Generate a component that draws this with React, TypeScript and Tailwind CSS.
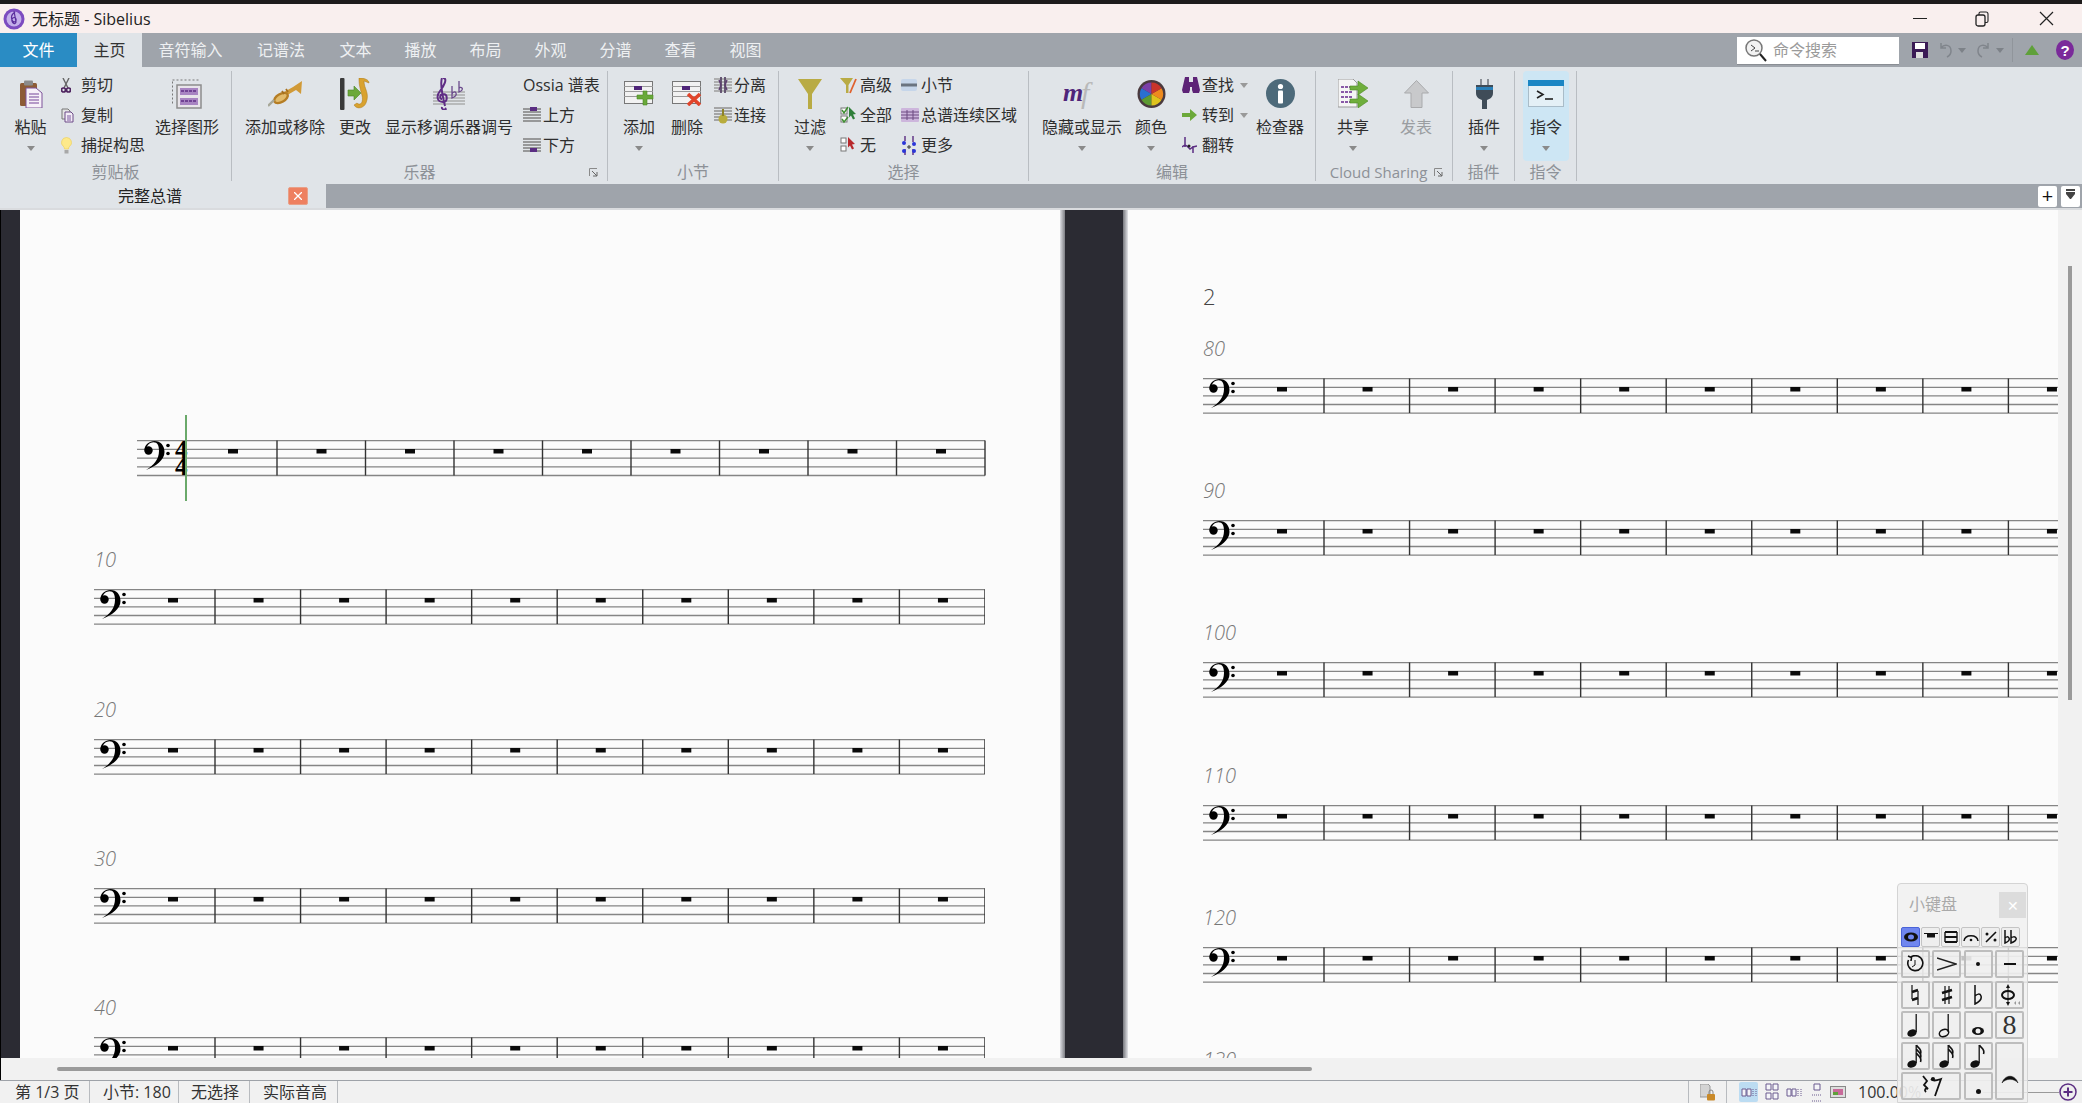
import type { ReactNode } from "react";

const Chevron = ({ color = "#8a8a8a" }: { color?: string }) => (
  <svg width="8" height="5" viewBox="0 0 8 5"><path d="M0 0h8L4 5z" fill={color} /></svg>
);

const StaffLines = ({ w = 18, color = "#777" }: { w?: number; color?: string }) => (
  <>
    {[2, 5, 8, 11, 14].map((y) => (
      <line key={y} x1="0" x2={w} y1={y} y2={y} stroke={color} strokeWidth="1.4" />
    ))}
  </>
);

const ic = {
  paste: (
    <svg width="24" height="28" viewBox="0 0 24 28">
      <rect x="1" y="3" width="17" height="23" rx="1.5" fill="#8d5c36" />
      <rect x="5" y="0.5" width="9" height="5" rx="1" fill="#8b8b8b" />
      <path d="M7 8h10l6 5v15H7z" fill="#f6f0f8" stroke="#7c5299" />
      {[14, 17, 20, 23].map((y) => (
        <line key={y} x1="10" x2="20" y1={y} y2={y} stroke="#9a74b4" strokeWidth="1.4" />
      ))}
    </svg>
  ),
  scissors: (
    <svg width="10" height="15" viewBox="0 0 10 15">
      <path d="M2 0l5 10M8 0L3 10" stroke="#666" strokeWidth="1.4" fill="none" />
      <circle cx="2.5" cy="12" r="2" fill="none" stroke="#4f2560" strokeWidth="1.7" />
      <circle cx="7.5" cy="12" r="2" fill="none" stroke="#4f2560" strokeWidth="1.7" />
    </svg>
  ),
  copy: (
    <svg width="13" height="15" viewBox="0 0 13 15">
      <path d="M1 1h6l2 2v8H1z" fill="#e4e4e4" stroke="#777" />
      <path d="M4 4h6l2 2v8H4z" fill="#f3edf6" stroke="#6d4a88" />
      <path d="M6 8h4M6 10h4M6 12h4" stroke="#7d58a0" />
    </svg>
  ),
  bulb: (
    <svg width="11" height="17" viewBox="0 0 11 17">
      <path d="M5.5 0.5a5 5 0 0 1 3 9c-.7.7-1 1.5-1 2.5h-4c0-1-.3-1.800-1-2.500a5 5 0 0 1 3-9z" fill="#fde98a" stroke="#ecd060" strokeWidth=".7" />
      <rect x="3.500" y="13" width="4" height="3.500" fill="#a8a8a8" />
    </svg>
  ),
  select: (
    <svg width="30" height="31" viewBox="0 0 30 31">
      <path d="M0.500 3.500V26M0.500 2H28" stroke="#777" strokeDasharray="2 2" fill="none" />
      <rect x="5" y="7" width="24" height="23" fill="#e8e4ea" stroke="#8c8c8c" strokeWidth="1.500" />
      <rect x="8" y="10" width="18" height="7" fill="#a884c2" />
      <rect x="8" y="20" width="18" height="7" fill="#a884c2" />
      <path d="M9 13h16M9 23h16" stroke="#5f2d85" strokeWidth="1.500" strokeDasharray="3 1" />
    </svg>
  ),
  trumpet: (
    <svg width="34" height="26" viewBox="0 0 34 26">
      <path d="M34 0L33 13l-5-4L9 20l-2-4L25 6z" fill="#d19a37" />
      <ellipse cx="13" cy="17" rx="7.500" ry="4" transform="rotate(-30 13 17)" fill="#e2bb6b" stroke="#b57d24" strokeWidth="2.400" />
      <path d="M6 19L0 25" stroke="#a7a798" strokeWidth="2.400" />
      <path d="M14 10l2 3M18 8l2 3" stroke="#a57020" strokeWidth="1.800" />
    </svg>
  ),
  change: (
    <svg width="32" height="32" viewBox="0 0 32 32">
      <rect x="1" y="0" width="4.500" height="32" rx="1" fill="#3a3a3a" />
      <path d="M9 12h6V8l7 7-7 7v-4H9z" fill="#6ca93a" stroke="#4b8427" strokeWidth=".6" />
      <path d="M20 0c6 0 10 2 10 5l-5-2c0 8 6 12 2 22-2 5-9 7-12 2l3-2c2 2 4 1 5-1 2-6-3-12-3-22z" fill="#d9a22f" stroke="#a9781a" strokeWidth=".5" />
    </svg>
  ),
  transpose: (
    <svg width="32" height="32" viewBox="0 0 32 32">
      {[14, 17, 20, 23, 26].map((y) => (
        <line key={y} x1="0" x2="32" y1={y} y2={y} stroke="#a2a2a2" strokeWidth="1.300" />
      ))}
      <path d="M12 30c3 3-4 2-3-1M10 0c5 0 1 8-3 13-4 5-3 11 3 11 5 0 5-8 0-8-3 0-4 5-1 5M9 0c-2 5 1 20 3 28" fill="none" stroke="#5f2d85" strokeWidth="2" />
      <path d="M19 8v12c3-1 5-3 4-5s-3-1-4 1M26 3v11c3-1 4-3 3-4s-3-1-3 1" fill="none" stroke="#6b4a8c" strokeWidth="1.300" />
    </svg>
  ),
  above: (
    <svg width="18" height="16" viewBox="0 0 18 16">
      <StaffLines color="#777" />
      <rect x="7" y="0" width="7" height="4" fill="#5a2d82" />
    </svg>
  ),
  below: (
    <svg width="18" height="16" viewBox="0 0 18 16">
      <StaffLines color="#777" />
      <rect x="7" y="11" width="7" height="4" fill="#5a2d82" />
    </svg>
  ),
  add: (
    <svg width="30" height="25" viewBox="0 0 30 25">
      <rect x="0.500" y="0.500" width="28" height="22" fill="#f2f2f2" stroke="#777" />
      <path d="M0 5.500h29M0 10.500h29M0 15.500h29" stroke="#9a9a9a" />
      <rect x="10" y="5" width="8" height="4" fill="#4f2579" />
      <path d="M19 10h4v4h6v4h-6v6h-4v-6h-6v-4h6z" fill="#69a93a" stroke="#4c8a24" strokeWidth=".6" />
    </svg>
  ),
  remove: (
    <svg width="30" height="25" viewBox="0 0 30 25">
      <rect x="0.500" y="0.500" width="28" height="22" fill="#f2f2f2" stroke="#777" />
      <path d="M0 5.500h29M0 10.500h29M0 15.500h29" stroke="#9a9a9a" />
      <rect x="10" y="5" width="8" height="4" fill="#4f2579" />
      <path d="M16 13l12 11M28 13L16 24" stroke="#e1442a" strokeWidth="3.600" />
    </svg>
  ),
  split: (
    <svg width="18" height="16" viewBox="0 0 18 16">
      <StaffLines color="#999" />
      <path d="M7 0v16M11 0v16" stroke="#5b4a6a" strokeWidth="1.800" />
      <path d="M7 8L5 3M11 8l2-5M7 8l-2 5M11 8l2 5" stroke="#5d3d70" strokeWidth="1.400" />
    </svg>
  ),
  join: (
    <svg width="18" height="18" viewBox="0 0 18 18">
      <StaffLines color="#8a8a8a" />
      <circle cx="9" cy="13" r="4.500" fill="#b8ac3c" />
      <rect x="8" y="3" width="2" height="7" fill="#8e8428" />
    </svg>
  ),
  filter: (
    <svg width="24" height="30" viewBox="0 0 24 30">
      <path d="M0 0h24L14 15v15h-4V15z" fill="#b9ab44" />
    </svg>
  ),
  advanced: (
    <svg width="17" height="17" viewBox="0 0 17 17">
      <path d="M0 1h13L8.500 8v8H6V8z" fill="#b9ab44" />
      <path d="M16 2L10 16" stroke="#e0622e" strokeWidth="1.800" />
    </svg>
  ),
  all: (
    <svg width="18" height="18" viewBox="0 0 18 18">
      <rect x="1" y="2" width="6" height="6" fill="#fff" stroke="#777" />
      <rect x="1" y="10" width="6" height="6" fill="#fff" stroke="#777" />
      <path d="M2 4l2 3 4-6M2 13l2 3 4-5" stroke="#3f8f32" strokeWidth="1.500" fill="none" />
      <path d="M9 1l7 7-3 .5 2 4-2 1-2-4-2 2z" fill="#2f7f3a" />
    </svg>
  ),
  none: (
    <svg width="18" height="18" viewBox="0 0 18 18">
      <rect x="1" y="2" width="5" height="5" fill="#fff" stroke="#777" />
      <rect x="1" y="10" width="5" height="5" fill="#fff" stroke="#777" />
      <path d="M8 1l7 7-3 .5 2 4-2 1-2-4-2 2z" fill="#b8282c" />
    </svg>
  ),
  bar: (
    <svg width="16" height="12" viewBox="0 0 16 12">
      <rect x="0" y="0" width="16" height="12" rx="2" fill="#c6d6ea" />
      <path d="M0 6h16" stroke="#6a7480" strokeWidth="3" />
    </svg>
  ),
  passage: (
    <svg width="18" height="14" viewBox="0 0 18 14">
      <rect x="0" y="0" width="18" height="14" rx="1" fill="#cdb6dc" />
      <path d="M0 4h18M0 7h18M0 10h18" stroke="#6c4a80" />
      <path d="M6 2v10M12 2v10" stroke="#6c4a80" />
    </svg>
  ),
  more: (
    <svg width="16" height="19" viewBox="0 0 16 19">
      <path d="M4 0v5M12 0v6M4 13v6M12 13v6" stroke="#5b2d82" strokeWidth="1.400" />
      <circle cx="3" cy="7" r="2" fill="#2a35d8" />
      <circle cx="13" cy="8" r="2" fill="#2a35d8" />
      <circle cx="3" cy="15" r="2" fill="#2a35d8" />
      <circle cx="13" cy="15" r="2" fill="#2a35d8" />
      <path d="M6 11h4M8 9v4" stroke="#333" />
    </svg>
  ),
  color: (
    <svg width="29" height="30" viewBox="0 0 30 30">
      <circle cx="15" cy="15" r="14.500" fill="#4a3a3e" />
      <path d="M15 15L15 3A12 12 0 0 0 4.600 9z" fill="#7b3fa8" />
      <path d="M15 15L4.600 9a12 12 0 0 0 0 12z" fill="#2a6fd0" />
      <path d="M15 15L4.600 21A12 12 0 0 0 15 27z" fill="#5d9a32" />
      <path d="M15 15v12a12 12 0 0 0 10.400-6z" fill="#dfc31c" />
      <path d="M15 15l10.400 6a12 12 0 0 0 0-12z" fill="#ee8a1e" />
      <path d="M15 15l10.400-6A12 12 0 0 0 15 3z" fill="#c9352a" />
    </svg>
  ),
  find: (
    <svg width="18" height="16" viewBox="0 0 18 16">
      <path d="M3 0h4v5h4V0h4l3 13-1 3h-6l-1-3V10H8v3l-1 3H1l-1-3z" fill="#5d2376" />
    </svg>
  ),
  goto: (
    <svg width="15" height="12" viewBox="0 0 15 12">
      <path d="M0 4h8V0l7 6-7 6V8H0z" fill="#6ca93a" />
    </svg>
  ),
  flip: (
    <svg width="15" height="16" viewBox="0 0 15 16">
      <path d="M3 0v10M0 10l3-2 2 1 3 3 3-2 4-1M11 9v7" stroke="#5b2d82" strokeWidth="1.500" fill="none" />
      <circle cx="7" cy="9" r="1.500" fill="#222" />
    </svg>
  ),
  info: (
    <svg width="29" height="29" viewBox="0 0 29 29">
      <circle cx="14.500" cy="14.500" r="14.500" fill="#4d6a7a" />
      <circle cx="14.500" cy="7.500" r="2.600" fill="#fff" />
      <rect x="12" y="11.500" width="5" height="13" rx="1" fill="#fff" />
    </svg>
  ),
  share: (
    <svg width="31" height="29" viewBox="0 0 31 29">
      <path d="M0 0h15l4 4v24H0z" fill="#f5f5f5" stroke="#999" />
      {[8, 13, 18, 23].map((y) => (
        <path key={y} d="M3 0h12" transform={`translate(0 ${y})`} stroke="#8a5aa8" strokeWidth="2" strokeDasharray="3 1" />
      ))}
      <path d="M12 7h8V2l10 7-10 7v-5h-8z" fill="#6fae3c" stroke="#4c8a24" strokeWidth=".6" />
      <path d="M12 20h8v-5l10 7-10 7v-5h-8z" fill="#6fae3c" stroke="#4c8a24" strokeWidth=".6" />
    </svg>
  ),
  publish: (
    <svg width="25" height="28" viewBox="0 0 25 28">
      <path d="M12.500 0.500L24.500 13H18v14.500H7V13H.5z" fill="#c8c9cb" stroke="#a9aaac" />
    </svg>
  ),
  plug: (
    <svg width="17" height="30" viewBox="0 0 17 30">
      <path d="M4 0h2v6H4zM11 0h2v6h-2z" fill="#8a8f96" />
      <path d="M0 6h17v8c0 4-3 6-6 7v9H6v-9c-3-1-6-3-6-7z" fill="#3f4c58" />
      <rect x="0" y="8" width="17" height="3" fill="#2a7fb8" />
    </svg>
  ),
  command: (
    <svg width="36" height="27" viewBox="0 0 36 27">
      <rect x="0.500" y="0.500" width="35" height="26" fill="#e4f0f6" stroke="#a9bcc8" />
      <rect x="0" y="0" width="36" height="6" fill="#1a86c4" />
      <path d="M9 11l6 3.500-6 3.500" fill="none" stroke="#222" strokeWidth="1.600" />
      <path d="M17 19h8" stroke="#222" strokeWidth="1.600" />
    </svg>
  ),
  mf: (
    <svg width="38" height="36" viewBox="0 0 38 36" className="overflow-visible">
      <text x="18" y="27" fontFamily="'Liberation Serif', serif" fontSize="30" fontStyle="italic" fill="#b9b9b9">f</text>
      <text x="0" y="25" fontFamily="'Liberation Serif', serif" fontSize="26" fontStyle="italic" fontWeight="700" fill="#4f2579">m</text>
    </svg>
  ),
};

const BigButton = ({ icon, label, w, chevron, dim, on }: { icon: ReactNode; label: string; w: string; chevron?: boolean; dim?: boolean; on?: boolean }) => (
  <div className={`flex flex-col items-center h-[90px] rounded-sm ${w} ${on ? "bg-[#cde6f4]" : ""}`}>
    <div className="flex h-[45px] items-center justify-center">{icon}</div>
    <div className={`h-[22px] whitespace-nowrap leading-[22px] ${dim ? "text-[#9a9da1]" : ""}`}>{label}</div>
    <div className="flex h-[21px] items-center">{chevron && <Chevron />}</div>
  </div>
);

const SmallCol = ({ w, items }: { w: string; items: { icon?: ReactNode; label: string; chevron?: boolean }[] }) => (
  <div className={`-mt-[1px] flex flex-col ${w}`}>
    {items.map((it) => (
      <div key={it.label} className="flex h-[30px] items-center whitespace-nowrap">
        {it.icon && <div className="flex w-[20px] shrink-0 items-center">{it.icon}</div>}
        <span>{it.label}</span>
        {it.chevron && <span className="ml-[6px]"><Chevron color="#999" /></span>}
      </div>
    ))}
  </div>
);

const Expander = () => (
  <svg className="absolute bottom-[4px] right-[9px]" width="9" height="9" viewBox="0 0 9 9">
    <path d="M0.500 8V0.500H8" fill="none" stroke="#8a8a8a" />
    <path d="M3 3l5 5M8 4v4H4" fill="none" stroke="#666" />
  </svg>
);

const Group = ({ w, label, children, expander, pad }: { w: string; label: string; children: ReactNode; expander?: boolean; pad?: string }) => (
  <div className={`relative flex h-[110px] flex-col border-r border-[#b9bdc2] ${w}`}>
    <div className="flex h-[90px]">{children}</div>
    <div className={`h-[20px] text-center leading-[22px] text-[#8d9197] ${pad ?? ""}`}>{label}</div>
    {expander && <Expander />}
  </div>
);

const BassClef = () => (
  <g>
    <circle cx="5.500" cy="9.500" r="4.200" />
    <path d="M1.500 9C1.500 3.500 6.500 0 11.500 0 17.500 0 21.500 4.500 21.500 11 21.500 19 12.500 25.500 3 29 10.500 24.500 16 18.500 16 10 16 4.500 14.500 1.200 10.500 1.200 7 1.200 4 4 3.500 7z" />
    <circle cx="25" cy="4.500" r="1.800" />
    <circle cx="25" cy="12.500" r="1.800" />
  </g>
);

const staffY = [0, 1, 2, 3, 4];

const System = ({ width }: { width: number }) => (
  <svg width={width} height="36" viewBox={`0 0 ${width} 36`} className="block">
    {staffY.map((i) => (
      <line key={i} x1="0" x2={width} y1={0.7 + i * 8.6} y2={0.7 + i * 8.6} stroke="#858585" strokeWidth="1.300" />
    ))}
    {Array.from({ length: 10 }, (_, i) => (
      <g key={i}>
        <line x1={121 + i * 85.55} x2={121 + i * 85.55} y1="0.500" y2="35" stroke="#333" strokeWidth="1.400" />
        <rect x={74 + i * 85.55} y="9" width="10" height="4.500" fill="#0a0a0a" />
      </g>
    ))}
    <g transform="translate(5 1)"><BassClef /></g>
  </svg>
);

const FirstSystem = () => (
  <svg width="849" height="36" viewBox="0 0 849 36" className="block overflow-visible">
    {staffY.map((i) => (
      <line key={i} x1="0" x2="848" y1={0.7 + i * 8.7} y2={0.7 + i * 8.7} stroke="#858585" strokeWidth="1.300" />
    ))}
    {Array.from({ length: 9 }, (_, i) => (
      <g key={i}>
        <line x1={140 + i * 88.5} x2={140 + i * 88.5} y1="0.500" y2="35.500" stroke="#333" strokeWidth="1.400" />
        <rect x={91 + i * 88.5} y="9" width="10" height="4.500" fill="#0a0a0a" />
      </g>
    ))}
    <g transform="translate(6 1)"><BassClef /></g>
    <text x="38" y="18" fontFamily="'Liberation Serif', serif" fontWeight="700" fontSize="25">4</text>
    <text x="38" y="35" fontFamily="'Liberation Serif', serif" fontWeight="700" fontSize="25">4</text>
    <line x1="49" x2="49" y1="-25" y2="61" stroke="#6aa96a" strokeWidth="2" />
  </svg>
);

const BarNumber = ({ n }: { n: number }) => (
  <div className="mb-[17px] mt-[1px] h-[24px] text-[20px] font-light italic leading-[24px] text-[#777]">{n}</div>
);

// ---- keypad bits
const Note = ({ flags = 0, hollow, stem = true }: { flags?: number; hollow?: boolean; stem?: boolean }) => (
  <svg width="22" height="26" viewBox="0 0 22 26">
    <ellipse cx="8" cy="21" rx="4.800" ry="3.500" transform="rotate(-20 8 21)" fill={hollow ? "none" : "#111"} stroke="#111" strokeWidth={hollow ? 1.500 : 0} />
    {stem && <path d="M12.200 20V2" stroke="#111" strokeWidth="1.300" />}
    {Array.from({ length: flags }, (_, i) => (
      <path key={i} d={`M12.500 ${2 + i * 4}c1 3 6 4 4 9`} stroke="#111" strokeWidth="1.600" fill="none" />
    ))}
  </svg>
);

const Key = ({ children, className = "" }: { children?: ReactNode; className?: string }) => (
  <div className={`flex items-center justify-center rounded-[2px] border-2 border-[#bdbdbd] bg-[#eeeeee]/60 text-[#111] ${className}`}>{children}</div>
);

const keypadTabs: ReactNode[] = [
  <svg key="a" width="16" height="10" viewBox="0 0 16 10"><ellipse cx="8" cy="5" rx="7" ry="4.500" fill="#111" /><ellipse cx="8" cy="5" rx="3" ry="2.500" fill="#6f86ef" /></svg>,
  <svg key="b" width="14" height="10" viewBox="0 0 14 10"><path d="M0 1.500h14" stroke="#111" /><rect x="3" y="1.500" width="8" height="4" fill="#111" /></svg>,
  <svg key="c" width="14" height="12" viewBox="0 0 14 12"><path d="M1 1h12M1 11h12" stroke="#111" strokeWidth="2" /><path d="M1 1v10M13 1v10" stroke="#111" strokeWidth="1.400" /><path d="M1 6h12" stroke="#111" strokeWidth="2" /></svg>,
  <svg key="d" width="16" height="10" viewBox="0 0 16 10"><path d="M1 9C2 2 14 2 15 9" fill="none" stroke="#111" strokeWidth="1.500" /><circle cx="8" cy="8" r="1.300" fill="#111" /></svg>,
  <svg key="e" width="14" height="12" viewBox="0 0 14 12"><path d="M2 11L12 1" stroke="#111" strokeWidth="1.600" /><circle cx="3" cy="3" r="1.500" fill="#111" /><circle cx="11" cy="9" r="1.500" fill="#111" /></svg>,
  <svg key="f" width="16" height="14" viewBox="0 0 16 14"><path d="M2 0v13c3-1 5-3 4-5s-3-1-4 0M8 0v13c3-1 6-3 5-5s-4-1-5 0" fill="none" stroke="#111" strokeWidth="1.500" /></svg>,
];

export default function App() {
  return (
    <div className="relative flex h-[1103px] w-[2082px] flex-col overflow-hidden bg-[#f1f1f1] font-['Open_Sans','Noto_Sans_CJK_SC',sans-serif] text-[16px] text-[#2b2b2b]">
      <div className="h-[4px] bg-[#1d1b1b]" />

      {/* title bar */}
      <div className="flex h-[29px] items-center bg-[#f9efee] pl-[3px]">
        <svg width="22" height="22" viewBox="0 0 22 22" className="mr-[7px]">
          <circle cx="11" cy="11" r="10.500" fill="#7c4bc0" />
          <circle cx="11" cy="11" r="7.500" fill="#c3aeea" />
          <path d="M12 4c-4 3-4 5-3 8 1 3 5 2 4-1s-5-1-4 2c.5 2 3 4 4 1L11 3" fill="none" stroke="#5a2e9c" strokeWidth="1.200" />
        </svg>
        <span className="text-[16px] text-[#222]">无标题 - Sibelius</span>
        <div className="ml-auto flex items-center">
          <span className="mr-[48px] h-[1.500px] w-[14px] bg-[#222]" />
          <svg width="14" height="16" viewBox="0 0 14 16" className="mr-[50px]">
            <rect x="1" y="4" width="9" height="11" rx="2" fill="none" stroke="#222" strokeWidth="1.300" />
            <path d="M4 4V2.500C4 1.500 4.500 1 5.500 1H11c1 0 2 1 2 2v7c0 1-.5 1.500-1.500 1.500H10" fill="none" stroke="#222" strokeWidth="1.100" />
          </svg>
          <svg width="15" height="15" viewBox="0 0 15 15" className="mr-[28px]">
            <path d="M1 1l13 13M14 1L1 14" stroke="#222" strokeWidth="1.200" />
          </svg>
        </div>
      </div>

      {/* ribbon tabs */}
      <div className="flex h-[34px] items-center bg-[#9fa4ab] text-[#eef0f2]">
        <div className="flex h-full w-[77px] items-center justify-center bg-[#2a8cc4] text-white">文件</div>
        <div className="flex h-full w-[65px] items-center justify-center bg-[#e0e4e8] text-[#333]">主页</div>
        <div className="flex h-full w-[97px] items-center justify-center">音符输入</div>
        <div className="flex h-full w-[84px] items-center justify-center">记谱法</div>
        <div className="flex h-full w-[65px] items-center justify-center">文本</div>
        <div className="flex h-full w-[65px] items-center justify-center">播放</div>
        <div className="flex h-full w-[65px] items-center justify-center">布局</div>
        <div className="flex h-full w-[65px] items-center justify-center">外观</div>
        <div className="flex h-full w-[65px] items-center justify-center">分谱</div>
        <div className="flex h-full w-[65px] items-center justify-center">查看</div>
        <div className="flex h-full w-[65px] items-center justify-center">视图</div>

        <div className="ml-auto flex items-center">
          <div className="flex h-[27px] w-[162px] items-center bg-white pl-[8px] text-[#9a9a9a] shadow-[0_1px_0_#8a8e94]">
            <svg width="22" height="24" viewBox="0 0 22 24" className="mr-[6px]">
              <circle cx="9" cy="10" r="8" fill="#f2f2f2" stroke="#777" strokeWidth="1.500" />
              <path d="M6 7l4 3-4 3M10 13h4" fill="none" stroke="#444" />
              <path d="M15 16l6 7" stroke="#222" strokeWidth="2" />
            </svg>
            命令搜索
          </div>
          <svg width="16" height="16" viewBox="0 0 16 16" className="ml-[13px]">
            <path d="M0 0h16v16H0z" fill="#3a1a55" />
            <rect x="3" y="1" width="10" height="6" fill="#fff" />
            <rect x="4" y="10" width="7" height="6" fill="#ddd" />
          </svg>
          <svg width="14" height="16" viewBox="0 0 14 16" className="ml-[10px]">
            <path d="M3 1v5h5M3 6c3-4 10-4 10 3 0 3-2 5-4 6" fill="none" stroke="#80858c" strokeWidth="1.500" />
          </svg>
          <span className="ml-[6px]"><Chevron color="#7d8288" /></span>
          <svg width="15" height="16" viewBox="0 0 15 16" className="ml-[11px]">
            <path d="M11 1v5H6M11 6C8 2 1 2 1 9c0 3 2 5 4 6" fill="none" stroke="#80858c" strokeWidth="1.500" />
          </svg>
          <span className="ml-[4px]"><Chevron color="#7d8288" /></span>
          <span className="ml-[8px] h-[24px] w-px bg-[#90959b]" />
          <svg width="14" height="10" viewBox="0 0 14 10" className="ml-[12px]">
            <path d="M7 0l7 10H0z" fill="#5fa03a" />
          </svg>
          <svg width="18" height="20" viewBox="0 0 18 20" className="ml-[17px] mr-[8px]">
            <ellipse cx="9" cy="10" rx="9" ry="10" fill="#7a2a9a" />
            <text x="9" y="15.500" textAnchor="middle" fontSize="15" fontWeight="700" fill="#fff" fontFamily="'Liberation Sans', sans-serif">?</text>
          </svg>
        </div>
      </div>

      {/* ribbon */}
      <div className="flex h-[117px] bg-[#e0e4e8] pt-[4px] text-[16px] text-[#2e2e2e]">
        <Group w="w-[232px]" label="剪贴板">
          <BigButton w="w-[61px]" icon={ic.paste} label="粘贴" chevron />
          <SmallCol w="w-[89px]" items={[{ icon: ic.scissors, label: "剪切" }, { icon: ic.copy, label: "复制" }, { icon: ic.bulb, label: "捕捉构思" }]} />
          <BigButton w="w-[74px]" icon={ic.select} label="选择图形" />
        </Group>
        <Group w="w-[376px]" label="乐器" expander>
          <div className="ml-[13px] flex">
            <BigButton w="w-[80px]" icon={ic.trumpet} label="添加或移除" />
            <BigButton w="w-[32px] ml-[14px]" icon={ic.change} label="更改" />
            <BigButton w="w-[128px] ml-[14px]" icon={ic.transpose} label="显示移调乐器调号" />
          </div>
          <SmallCol
            w="w-[90px] ml-[10px]"
            items={[{ label: "Ossia 谱表" }, { icon: ic.above, label: "上方" }, { icon: ic.below, label: "下方" }]}
          />
        </Group>
        <Group w="w-[171px]" label="小节">
          <BigButton w="w-[48px] ml-[7px]" icon={ic.add} label="添加" chevron />
          <BigButton w="w-[48px]" icon={ic.remove} label="删除" />
          <SmallCol w="w-[60px] ml-[3px]" items={[{ icon: ic.split, label: "分离" }, { icon: ic.join, label: "连接" }]} />
        </Group>
        <Group w="w-[250px]" label="选择">
          <BigButton w="w-[48px] ml-[7px]" icon={ic.filter} label="过滤" chevron />
          <SmallCol w="w-[61px] ml-[6px]" items={[{ icon: ic.advanced, label: "高级" }, { icon: ic.all, label: "全部" }, { icon: ic.none, label: "无" }]} />
          <SmallCol w="w-[120px]" items={[{ icon: ic.bar, label: "小节" }, { icon: ic.passage, label: "总谱连续区域" }, { icon: ic.more, label: "更多" }]} />
        </Group>
        <Group w="w-[287px]" label="编辑">
          <BigButton w="w-[80px] ml-[13px]" icon={ic.mf} label="隐藏或显示" chevron />
          <BigButton w="w-[48px] ml-[5px]" icon={ic.color} label="颜色" chevron />
          <SmallCol w="w-[74px] ml-[7px]" items={[{ icon: ic.find, label: "查找", chevron: true }, { icon: ic.goto, label: "转到", chevron: true }, { icon: ic.flip, label: "翻转" }]} />
          <BigButton w="w-[48px]" icon={ic.info} label="检查器" />
        </Group>
        <Group w="w-[137px]" label="Cloud Sharing" expander pad="pr-[11px] text-[15px]">
          <BigButton w="w-[48px] ml-[13px]" icon={ic.share} label="共享" chevron />
          <BigButton w="w-[48px] ml-[15px]" icon={ic.publish} label="发表" dim />
        </Group>
        <Group w="w-[62px]" label="插件">
          <BigButton w="w-[48px] ml-[7px]" icon={ic.plug} label="插件" chevron />
        </Group>
        <Group w="w-[62px]" label="指令">
          <BigButton w="w-[46px] ml-[8px]" icon={ic.command} label="指令" chevron on />
        </Group>
      </div>

      {/* document tabs */}
      <div className="flex h-[24px] items-center bg-[#9fa4ab]">
        <div className="flex h-full w-[326px] items-center bg-[#e0e4e8]">
          <span className="ml-[118px] text-[#222]">完整总谱</span>
          <span className="ml-[106px] flex h-[18px] w-[20px] items-center justify-center rounded-[2px] border border-[#e8a088] bg-[#ee8060]">
            <svg width="8" height="8" viewBox="0 0 8 8"><path d="M0 0l8 8M8 0L0 8" stroke="#fff" strokeWidth="1.300" /></svg>
          </span>
        </div>
        <div className="ml-auto mr-[2px] flex gap-[4px]">
          <span className="flex h-[21px] w-[19px] items-center justify-center rounded-[2px] bg-white text-[20px] leading-none text-[#111]">+</span>
          <span className="flex h-[21px] w-[19px] items-start justify-center rounded-[2px] bg-white pt-[3px]">
            <svg width="11" height="12" viewBox="0 0 11 12"><path d="M1 0h9v2H1zM1 3h9v2L6 10H5L1 5z" fill="#444" /></svg>
          </span>
        </div>
      </div>

      {/* score area */}
      <div className="flex h-[850px] border-t-2 border-[#d9dbde] bg-[#2b2b33]">
        <div className="w-[20px] shrink-0 border-l border-black" />
        <div className="flex h-full w-[1040px] flex-col gap-[71.300px] overflow-hidden bg-[#fbfbfb] pl-[74px] pt-[230px]">
          <div className="ml-[43px]"><FirstSystem /></div>
          {[10, 20, 30, 40].map((n) => (
            <div key={n}>
              <BarNumber n={n} />
              <System width={891} />
            </div>
          ))}
        </div>
        <div className="w-[5px] shrink-0 bg-gradient-to-r from-[#dfe0e5] to-[#7d7e84]" />
        <div className="w-[58px] shrink-0" />
        <div className="w-[5px] shrink-0 bg-gradient-to-r from-[#77787e] to-[#e4e5e9]" />
        <div className="flex h-full w-[930px] shrink-0 flex-col overflow-hidden bg-[#fbfbfb] pl-[75px] pt-[74px]">
          <div className="h-[24px] text-[22px] font-light leading-[24px] text-[#444]">2</div>
          <div className="mt-[28px] flex flex-col gap-[64.200px]">
            {[80, 90, 100, 110, 120, 130].map((n) => (
              <div key={n}>
                <BarNumber n={n} />
                <System width={855} />
              </div>
            ))}
          </div>
        </div>
        <div className="flex flex-1 justify-center bg-[#f1f1f1] pt-[56px]">
          <div className="h-[434px] w-[4px] bg-[#9a9a9a]" />
        </div>
      </div>

      {/* horizontal scroll */}
      <div className="flex h-[22px] items-center border-l border-black pl-[56px]">
        <div className="h-[4px] w-[1255px] rounded-full bg-[#9a9a9a]" />
      </div>

      {/* status bar */}
      <div className="flex h-[23px] items-center border-t border-[#9ea2a8] text-[16px] text-[#333]">
        <div className="flex h-full w-[90px] items-center border-r border-[#b8bbbf] pl-[15px]">第 1/3 页</div>
        <div className="flex h-full w-[89px] items-center border-r border-[#b8bbbf] pl-[13px]">小节: 180</div>
        <div className="flex h-full w-[71px] items-center border-r border-[#b8bbbf] pl-[12px]">无选择</div>
        <div className="flex h-full w-[88px] items-center border-r border-[#b8bbbf] pl-[13px]">实际音高</div>
        <div className="ml-[1350px] flex h-full w-[39px] items-center border-x border-[#b8bbbf] pl-[11px]">
          <svg width="15" height="17" viewBox="0 0 15 17">
            <path d="M0 0h8l2 2v11H0z" fill="#d4d4d4" stroke="#999" />
            <rect x="7" y="10" width="8" height="6.500" rx="1" fill="#c98a2a" />
            <path d="M9 10V8a2 2 0 0 1 4 0v2" fill="none" stroke="#888" />
          </svg>
        </div>
        <div className="ml-[12px] flex h-[20px] w-[19px] items-center justify-center rounded-[2px] bg-[#bcdcf2]">
          <svg width="16" height="9" viewBox="0 0 16 9"><path d="M1 1h4v7H1zM6 1h4v7H6z" fill="#f4f4f8" stroke="#6a5a8f" /><path d="M12 1v7M15 1v7" stroke="#6a5a8f" strokeDasharray="1 1" /></svg>
        </div>
        <svg width="14" height="18" viewBox="0 0 14 18" className="ml-[7px]"><path d="M1 1h5v6H1zM8 1h5v6H8zM1 10h5v6H1zM8 10h5v6H8z" fill="#f4f4f8" stroke="#6a5a8f" /></svg>
        <svg width="16" height="9" viewBox="0 0 16 9" className="ml-[7px]"><path d="M1 1h4v7H1zM6 1h4v7H6z" fill="#f4f4f8" stroke="#6a5a8f" /><path d="M12 1v7M15 1v7" stroke="#6a5a8f" strokeDasharray="1 1" /></svg>
        <svg width="12" height="19" viewBox="0 0 12 19" className="ml-[9px]"><path d="M3 1h6v6H3z" fill="#f4f4f8" stroke="#6a5a8f" /><path d="M1 12h10M1 18h10" stroke="#6a5a8f" strokeDasharray="1 1" /></svg>
        <svg width="16" height="12" viewBox="0 0 16 12" className="ml-[7px]"><rect x="0.500" y="0.500" width="15" height="11" fill="#ddd" stroke="#888" /><rect x="3" y="3" width="10" height="6" fill="#c86a9a" /><rect x="3" y="6" width="5" height="3" fill="#5fa03a" /></svg>
        <span className="ml-[12px]">100.00%</span>
        <span className="ml-[62px] h-px w-[76px] bg-[#999]" />
        <svg width="18" height="18" viewBox="0 0 18 18">
          <circle cx="9" cy="9" r="8" fill="#eee" stroke="#5b2d82" strokeWidth="1.500" />
          <path d="M4.500 9h9M9 4.500v9" stroke="#5b2d82" strokeWidth="2" />
        </svg>
      </div>

      {/* keypad */}
      <div className="absolute left-[1897px] top-[883px] h-[220px] w-[131px] rounded-t-[4px] border border-[#d4d4d4] bg-[#f0f0f0]/80">
        <div className="flex h-[43px] items-start pl-[11px] pt-[8px] text-[#a9a9a9]">
          小键盘
          <span className="ml-auto mr-[1px] flex h-[26px] w-[27px] items-center justify-center bg-[#dcdcdc] text-[14px] text-white">✕</span>
        </div>
        <div className="mx-[3px] flex h-[20px] gap-px">
          {keypadTabs.map((t, i) => (
            <div key={i} className={`flex w-[19px] items-center justify-center rounded-[2px] ${i === 0 ? "border border-[#4a63d8] bg-[#6f86ef]" : "border border-[#c4c4c4] bg-[#eee]"}`}>{t}</div>
          ))}
        </div>
        <div className="mx-[3px] mt-[3px] grid grid-cols-4 grid-rows-[28px_28px_28px_28px_28px] gap-[2.500px]">
          <Key>
            <svg width="18" height="18" viewBox="0 0 18 18"><path d="M5 2a7.500 7.500 0 1 1-2.500 3M2 1l3.500 1.500L5 6" fill="none" stroke="#111" strokeWidth="1.600" /><path d="M9 5v5l-3 2" fill="none" stroke="#111" /></svg>
          </Key>
          <Key><svg width="20" height="14" viewBox="0 0 20 14"><path d="M0 1l19 6L0 13" fill="none" stroke="#222" strokeWidth="1.400" /></svg></Key>
          <Key><span className="h-[4px] w-[4px] rounded-full bg-[#111]" /></Key>
          <Key><span className="h-[2px] w-[12px] bg-[#111]" /></Key>

          <Key>
            <svg width="10" height="20" viewBox="0 0 10 20"><path d="M2 0v14M8 6v14" stroke="#111" strokeWidth="1.200" /><path d="M2 7l6-2M2 15l6-2" stroke="#111" strokeWidth="2.400" /></svg>
          </Key>
          <Key>
            <svg width="12" height="20" viewBox="0 0 12 20"><path d="M4 1v18M8 1v18" stroke="#111" strokeWidth="1.200" /><path d="M1 8l10-3M1 15l10-3" stroke="#111" strokeWidth="2.400" /></svg>
          </Key>
          <Key>
            <svg width="10" height="20" viewBox="0 0 10 20"><path d="M2 0v19c4-2 7-5 6-8s-4-2-6 0" fill="none" stroke="#111" strokeWidth="1.500" /></svg>
          </Key>
          <Key>
            <svg width="22" height="22" viewBox="0 0 22 22"><path d="M9 0l2 4H7zM9 22l2-4H7z" fill="#111" /><ellipse cx="9" cy="11" rx="6" ry="4" fill="none" stroke="#111" strokeWidth="2" /><path d="M9 4v14" stroke="#111" /><path d="M17 17l-2 2 2 2zM21 17l-2 2 2 2z" fill="#999" /></svg>
          </Key>

          <Key><Note /></Key>
          <Key><Note hollow /></Key>
          <Key><svg width="14" height="10" viewBox="0 0 14 10" className="mt-[12px]"><ellipse cx="7" cy="5" rx="6" ry="4" fill="#111" /><ellipse cx="7" cy="5" rx="2.500" ry="2.500" fill="#eee" /></svg></Key>
          <Key><span className="font-['Liberation_Serif',serif] text-[28px] leading-none text-[#333]">8</span></Key>

          <Key><Note flags={3} /></Key>
          <Key><Note flags={2} /></Key>
          <Key><Note flags={1} /></Key>
          <Key className="row-span-2 items-end pb-[14px]">
            <svg width="18" height="9" viewBox="0 0 18 9"><path d="M1 8C4-1 14-1 17 8 13 3 5 3 1 8z" fill="#111" stroke="#111" strokeWidth=".5" /></svg>
          </Key>

          <Key className="col-span-2">
            <svg width="26" height="22" viewBox="0 0 26 22"><path d="M5 1l4 5-3 4 4 4c-3-1-4 1-2 3" fill="none" stroke="#111" strokeWidth="1.800" /><path d="M13 4c2 2 4 2 10 0L17 21" fill="none" stroke="#111" strokeWidth="1.800" /><circle cx="15" cy="4" r="2" fill="#111" /></svg>
          </Key>
          <Key className="items-end pb-[4px]"><span className="h-[5px] w-[5px] rounded-full bg-[#111]" /></Key>
        </div>
      </div>
    </div>
  );
}
